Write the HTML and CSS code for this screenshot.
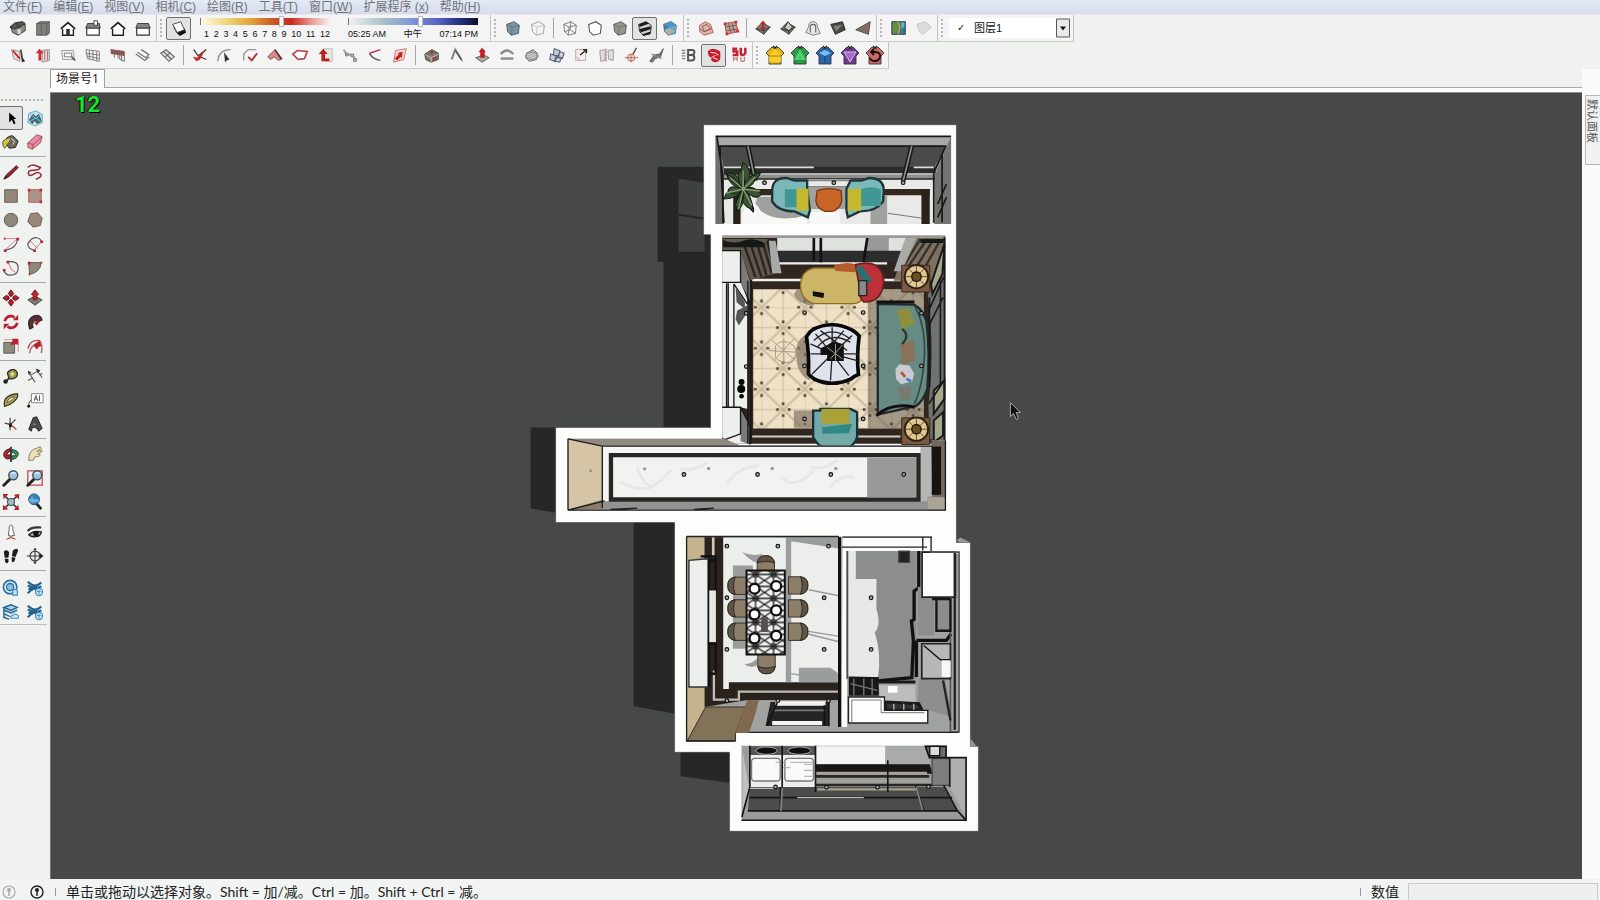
FILE: index.html
```html
<!DOCTYPE html>
<html lang="zh-CN">
<head>
<meta charset="utf-8">
<title>场景号1</title>
<link rel="stylesheet" href="styles.css">
</head>
<body>
<svg class="defs" aria-hidden="true">
  <defs>
    <symbol id="cube" viewBox="0 0 20 20"><path d="M3 6 11 3l6 4-1 9-8 2-4-4z" stroke="#555" stroke-linejoin="round"/><path d="M3 6l6 3 8-2M9 9l-1 9" fill="none" stroke="#555" stroke-opacity=".5"/></symbol>
    <symbol id="shirt" viewBox="0 0 20 20"><path d="M7 2l1 1h4l1-1 6 6-3 3v8H4v-8L1 8z" stroke="#333" stroke-width=".9" stroke-linejoin="round"/><path d="M8 1l2 2 2-2" fill="none" stroke="#222" stroke-width="1.4"/></symbol>
    <symbol id="quad" viewBox="0 0 20 20"><path d="M2 11 9 4l9 5-7 8z" fill="#77776f" stroke="#444"/><path d="M2 11l9 2 7-4M11 13v4" fill="none" stroke="#333"/></symbol>
    <symbol id="lens" viewBox="0 0 20 20"><path d="M2 18l7-7" stroke="#222" stroke-width="3.2" stroke-linecap="round"/><circle cx="12.500" cy="7" r="5" fill="#9fc3dd" stroke="#3f5664" stroke-width="1.600"/><path d="M10 6q2-3 5-1" stroke="#e4f2fa" stroke-width="1.400" fill="none"/></symbol>
    <symbol id="waves" viewBox="0 0 20 20"><path d="M2 3q8 8 15 1M2 7q8 6 15 1M2 16q6-8 14-4M3 12q4-5 9-3" fill="none" stroke="#23648f" stroke-width="2.400"/><circle cx="14.500" cy="14.500" r="4" fill="#cfe6f5" stroke="#3b8bc1" stroke-width="1.300"/><path d="M12 14h5M14.500 12v5" stroke="#3b8bc1"/></symbol>
    <pattern id="tile" x="363" y="230" width="130" height="123" patternUnits="userSpaceOnUse">
      <rect width="130" height="123" fill="#eee1c6"/>
      <path d="M0 0 130 123M130 0 0 123" stroke="#cdbfa3" stroke-width="7"/>
      <path d="M0 0H130M0 61H130M0 0V123M65 0V123" stroke="#b5a88e" stroke-width="2"/>
      <g fill="#54452f"><path d="M-4 14h8v9h-8zM14-4h9v8h-9zM126 14h8v9h-8zM107-4h9v8h-9zM-4 100h8v9h-8zM14 119h9v8h-9zM126 100h8v9h-8zM107 119h9v8h-9z"/><path d="M61 40h8v8h-8zM61 75h8v8h-8zM44 57h8v8h-8zM79 57h8v8h-8z"/></g>
    </pattern>
    <pattern id="lace" width="54" height="36" patternUnits="userSpaceOnUse">
      <rect width="54" height="36" fill="#f2f2f0"/><path d="M0 0 54 36M54 0 0 36M27 0V36M0 18H54" stroke="#222" stroke-width="4"/><circle cx="27" cy="18" r="9" fill="none" stroke="#222" stroke-width="3"/>
    </pattern>
    <g id="lamp"><circle r="5.500" fill="#aaa" stroke="#111" stroke-width="3.500"/></g>
    <g id="leaves"><path d="M0 0q-50-10-58 30 40 0 58-30q-20-60-50-45 10 40 50 45q-30 30-18 68 30-30 18-68q40 40 52 15-20-30-52-15q40-50 0-80-20 50 0 80q50-30 52-50-45 10-52 50q40 60 30 70-25-20-30-70z"/></g>
    <g id="seat"><path d="M-28-26H10q20 4 20 26 0 22-20 26H-28z" fill="#8d7e69" stroke="#3b342b" stroke-width="3"/><path d="M8-26q24 4 22 26 2 22-22 26 10-26 0-52z" fill="#5f5546" stroke="#2e2922" stroke-width="3"/></g>
    <g id="plate"><circle r="15" fill="#fff" stroke="#111" stroke-width="7"/></g>
    <g id="sidelamp"><path d="M-44-34H40V46H-44z" fill="#7b5a40" stroke="#38291e" stroke-width="3"/><circle r="35" fill="#e0c68f" stroke="#2c2116" stroke-width="6"/><path d="M0-33V33M-33 0H33M-24-24 24 24M24-24-24 24" stroke="#6b5430" stroke-width="3"/><circle r="14" fill="#6a4f22" stroke="#1c150b" stroke-width="4"/></g>
  </defs>
</svg>

<nav class="menubar">
  <button>文件(<u>F</u>)</button><button>编辑(<u>E</u>)</button><button>视图(<u>V</u>)</button><button>相机(<u>C</u>)</button><button>绘图(<u>R</u>)</button><button>工具(<u>T</u>)</button><button>窗口(<u>W</u>)</button><button>扩展程序 (<u>x</u>)</button><button>帮助(<u>H</u>)</button>
</nav>

<header class="toolbars">
  <div class="toolrow">
    <div class="group first">
      <button class="tool" aria-label="等轴视图"><svg viewBox="0 0 20 20"><path d="M2 9l6-4 10 1v7l-8 5-6-3z" fill="#8c8c84" stroke="#333"/><path d="M1 9l6-5 5 5-6 2zM12 9l6-4-3-2-7 1" fill="#555" stroke="#222"/><path d="M9 12l4-1v5l-3 1z" fill="#ddd"/></svg></button>
      <button class="tool" aria-label="俯视图"><svg viewBox="0 0 20 20"><path d="M3 5l4-2h10v13l-3 2H3z" fill="#80807a" stroke="#555"/><path d="M3 5h11v13M14 5l3-2M8 5v13" stroke="#5f5f5a" fill="none"/></svg></button>
      <button class="tool" aria-label="前视图"><svg viewBox="0 0 20 20"><path d="M4 10v8h12v-8" fill="#fff" stroke="#222" stroke-width="1.500"/><path d="M2 11l8-7 8 7" fill="#fff" stroke="#222" stroke-width="2"/><path d="M8 11h4v7H8z" fill="#333"/></svg></button>
      <button class="tool" aria-label="右视图"><svg viewBox="0 0 20 20"><path d="M3 10h14v8H3z" fill="#fff" stroke="#333" stroke-width="1.300"/><path d="M4 5h13l1 5H2z" fill="#85857e" stroke="#333"/><path d="M11 2h4v5h-4z" fill="#fff" stroke="#333"/></svg></button>
      <button class="tool" aria-label="后视图"><svg viewBox="0 0 20 20"><path d="M4 10v8h12v-8" fill="#fff" stroke="#222" stroke-width="1.500"/><path d="M2 11l8-7 8 7" fill="#fff" stroke="#222" stroke-width="2"/></svg></button>
      <button class="tool" aria-label="左视图"><svg viewBox="0 0 20 20"><path d="M3 10h14v8H3z" fill="#fff" stroke="#333" stroke-width="1.300"/><path d="M4 5h12l2 5H2z" fill="#85857e" stroke="#333"/></svg></button>
    </div>
    <div class="group shadows">
      <i class="grip"></i>
      <button class="tool on" aria-label="显示阴影" aria-pressed="true"><svg viewBox="0 0 20 20"><path d="M6 14l10-4 2 5-7 4z" fill="#111"/><path d="M3 6l9-3 4 9-8 3z" fill="#fff" stroke="#444"/><path d="M3 6l5 9 1 3-5-8z" fill="#555"/></svg></button>
      <div class="slide months">
        <input type="range" aria-label="月份" min="0" max="100" value="63">
        <div class="ticks"><span>1</span><span>2</span><span>3</span><span>4</span><span>5</span><span>6</span><span>7</span><span>8</span><span>9</span><span>10</span><span>11</span><span>12</span></div>
      </div>
      <div class="slide hours">
        <input type="range" aria-label="时间" min="0" max="100" value="56">
        <div class="ticks"><span>05:25 AM</span><span>中午</span><span>07:14 PM</span></div>
      </div>
    </div>
    <div class="group">
      <i class="grip"></i>
      <button class="tool" aria-label="X 光透视"><svg fill="#7695aa"><use href="#cube"/></svg></button>
      <button class="tool" aria-label="后边线"><svg fill="#f6f6f6" opacity=".55"><use href="#cube"/></svg></button>
      <i class="sep"></i>
      <button class="tool" aria-label="线框显示"><svg viewBox="0 0 20 20"><path d="M3 6 11 3l6 4-1 9-8 2-4-4zM3 6l6 3 8-2M9 9l-1 9M11 3l-1 9-6 2M10 12l6 4" fill="none" stroke="#777"/></svg></button>
      <button class="tool" aria-label="消隐"><svg viewBox="0 0 20 20"><path d="M3 6 11 3l6 4-1 9-8 2-4-4z" fill="#fff" stroke="#555" stroke-width="1.200"/></svg></button>
      <button class="tool" aria-label="阴影"><svg fill="#94968a"><use href="#cube"/></svg></button>
      <button class="tool on" aria-label="材质贴图" aria-pressed="true"><svg viewBox="0 0 20 20"><path d="M3 6 11 3l6 4-1 9-8 2-4-4z" fill="#d4d4cf" stroke="#333"/><path d="M3 6l8-3 4 2-11 4zM4 11l12-3 1 3-12 4zM7 17l9-3v3l-8 2z" fill="#1c1c1c"/></svg></button>
      <button class="tool" aria-label="单色显示"><svg viewBox="0 0 20 20"><path d="M3 6 11 3l6 4-1 9-8 2-4-4z" fill="#3f86b9" stroke="#456"/><path d="M9 9l8-2-1 9-8 2z" fill="#6aa5cf"/><path d="M3 6l8-3 5 3-7 3z" fill="#4b97cd"/><path d="M4 12l5-2 7 4-8 4-4-4z" fill="#a9b3a9"/></svg></button>
    </div>
    <div class="group">
      <i class="grip"></i>
      <button class="tool" aria-label="根据等高线创建"><svg viewBox="0 0 20 20"><path d="M3 7l6-4 6 3 3 9-10 3-5-4z" fill="#d9b6ae" stroke="#b8574f"/><path d="M6 8l5-2 4 5-7 3zM3 11l5 3 8-3" fill="none" stroke="#a0504a"/></svg></button>
      <button class="tool" aria-label="根据网格创建"><svg viewBox="0 0 20 20"><path d="M3 5l12-2 3 11-13 3z" fill="#b5aa9f" stroke="#b14c44"/><path d="M7 4l3 12M11 4l3 11M4 9l12-2M5 13l12-2" stroke="#8b4b44"/><path d="M2 4h3v3H2zM14 2h3v3h-3zM4 15h3v3H4zM16 12h3v3h-3z" fill="#cf2c2c"/></svg></button>
      <i class="sep"></i>
      <button class="tool" aria-label="曲面起伏"><svg viewBox="0 0 20 20"><use href="#quad" width="20" height="20"/><path d="M10 2l3 3-2 1v3l2 1-3 3-3-3 2-1V6L7 5z" fill="#bd2424"/></svg></button>
      <button class="tool" aria-label="曲面平整"><svg viewBox="0 0 20 20"><use href="#quad" width="20" height="20"/><path d="M6 10l4-7 5 6-4 4z" fill="#c9c9c6" stroke="#222"/></svg></button>
      <button class="tool" aria-label="曲面投射"><svg viewBox="0 0 20 20"><path d="M5 9q0-6 5-6t5 6l3 7-8 2-8-3z" fill="#e6e6e4" stroke="#777"/><path d="M7 15V9q0-3 3-3t3 3v6" fill="none" stroke="#666" stroke-width="1.300"/></svg></button>
      <button class="tool" aria-label="添加细部"><svg viewBox="0 0 20 20"><path d="M2 6l13-3 3 9-11 5z" fill="#494947" stroke="#222"/><path d="M5 8l10-2-7 8z" fill="#80807a"/></svg></button>
      <button class="tool" aria-label="对调角线"><svg viewBox="0 0 20 20"><path d="M2 12L18 3l-2 14z" fill="#777269" stroke="#444"/><path d="M10 8l5 8 2-9z" fill="#8f6660"/></svg></button>
    </div>
    <div class="group">
      <i class="grip"></i>
      <button class="tool" aria-label="添加位置"><svg viewBox="0 0 20 20"><path d="M2 3h15v14H2z" fill="#3c7690" stroke="#333"/><path d="M3 4h6l2 5-4 7H3z" fill="#6b8d42"/><path d="M12 4h4v5l-3 2z" fill="#59b1d1"/><path d="M9 3l2 6-2 8" stroke="#caa741" stroke-width="1.500" fill="none"/></svg></button>
      <button class="tool" aria-label="切换地形"><svg viewBox="0 0 20 20"><path d="M2 6l10-3 6 6-9 8-4-3z" fill="#dcdcda" stroke="#c2c2c0"/></svg></button>
    </div>
    <div class="group">
      <i class="grip"></i>
      <div class="combo">
        <span class="check">✓</span>
        <select aria-label="图层"><option>图层1</option></select>
        <svg class="drop" viewBox="0 0 14 19"><path d="M.5.500h13v18H.5z" fill="#e9eaea" stroke="#555"/><path d="M4 8h6l-3 4z" fill="#111"/></svg>
      </div>
    </div>
  </div>

  <div class="toolrow">
    <div class="group first">
      <button class="tool" aria-label="拉线成面"><svg viewBox="0 0 20 20"><path d="M3 4l9 2v11l-7-3z" fill="#ddd" stroke="#999"/><path d="M4 5l8 9" stroke="#c22" stroke-width="2"/><path d="M13 4l2 12" stroke="#444" stroke-width="2"/><path d="M15 13l3 4-4 1z" fill="#222"/></svg></button>
      <button class="tool" aria-label="路径成面"><svg viewBox="0 0 20 20"><path d="M9 5l8-1v12l-8 2z" fill="#e3dcd8" stroke="#888"/><path d="M12 5v11M15 5v11" stroke="#b66"/><path d="M6 3l5 5H8v8H5V8H2z" fill="#cd2b2b"/></svg></button>
      <button class="tool" aria-label="开窗"><svg viewBox="0 0 20 20"><path d="M3 5h13l1 10H4z" fill="#eee" stroke="#999"/><path d="M6 8h8v4H6z" fill="#fff" stroke="#777"/><path d="M14 12l4 4" stroke="#444" stroke-width="1.500"/></svg></button>
      <button class="tool" aria-label="幕墙"><svg viewBox="0 0 20 20"><path d="M2 4l15 2v11l-13-3zM2 8l15 2M3 11l14 3M6 5v10M10 5v11M14 6v11" fill="none" stroke="#777"/></svg></button>
      <button class="tool" aria-label="墙体"><svg viewBox="0 0 20 20"><path d="M2 4l15 2v5l-15-2z" fill="#b44"/><path d="M2 4l15 2v11l-5-2V9l-8-1zM3 7h13M6 5v8M10 6v8M14 6v10" fill="none" stroke="#666"/></svg></button>
      <button class="tool" aria-label="楼梯"><svg viewBox="0 0 20 20"><path d="M2 9l10 7 5-4M4 7l9 6 4-4M8 4l8 5" fill="none" stroke="#777" stroke-width="1.400"/></svg></button>
      <button class="tool" aria-label="坡道"><svg viewBox="0 0 20 20"><path d="M2 8l9 9 6-5-9-8zM5 6l9 9M7 12l6-5" fill="#ddd" stroke="#666" stroke-width="1.200"/></svg></button>
      <i class="sep"></i>
      <button class="tool" aria-label="修剪"><svg viewBox="0 0 20 20"><path d="M3 4l5 7 9-7M8 11l9 4" fill="none" stroke="#444" stroke-width="1.500"/><path d="M2 12l5 1 9-9-6 11-4 2z" fill="#c22"/></svg></button>
      <button class="tool" aria-label="圆角"><svg viewBox="0 0 20 20"><path d="M2 17q1-13 14-13" fill="none" stroke="#888" stroke-width="1.500"/><path d="M9 7l6 8-3 1-2 2z" fill="#333"/></svg></button>
      <button class="tool" aria-label="倒角"><svg viewBox="0 0 20 20"><path d="M3 16V9l5-5h9" fill="none" stroke="#999" stroke-width="1.500"/><path d="M8 12l4 4 6-8" fill="none" stroke="#b12a38" stroke-width="2"/></svg></button>
      <button class="tool" aria-label="屋顶"><svg viewBox="0 0 20 20"><path d="M2 12l8-8 8 10-4 2-5-4-4 3z" fill="#d88a90" stroke="#943"/><path d="M10 4l7 11" stroke="#333" stroke-width="1.500"/></svg></button>
      <button class="tool" aria-label="偏移面"><svg viewBox="0 0 20 20"><path d="M2 9l5-4 11 1-3 8-7 1z" fill="#fff" stroke="#bf3e43" stroke-width="1.800"/><path d="M2 9l6 6 7-1" fill="none" stroke="#855" stroke-width="1"/></svg></button>
      <button class="tool" aria-label="拉伸"><svg viewBox="0 0 20 20"><path d="M9 3h9v14H9z" fill="#e6e6e4" stroke="#bbb"/><path d="M15 17H6V9H3l5-6 5 6h-3v5h5z" fill="#be2020"/></svg></button>
      <button class="tool" aria-label="焊接"><svg viewBox="0 0 20 20"><path d="M3 4l3 5 7 1 3 6" fill="none" stroke="#999" stroke-width="2"/><path d="M5 8h3v3H5zM11 9h3v3h-3zM14 14h3v3h-3z" fill="#bbb" stroke="#777"/></svg></button>
      <button class="tool" aria-label="延伸"><svg viewBox="0 0 20 20"><path d="M16 4L4 8" stroke="#b34" stroke-width="1.600"/><path d="M4 8q2 6 12 8" fill="none" stroke="#555" stroke-width="1.600"/></svg></button>
      <button class="tool" aria-label="选面"><svg viewBox="0 0 20 20"><path d="M5 5l12-2-3 12-11 3z" fill="#f2dfd8" stroke="#c66"/><path d="M13 6L7 8l2 1-5 5 3 2 4-4 1 2z" fill="#c8231f"/></svg></button>
      <i class="sep"></i>
      <button class="tool" aria-label="组件"><svg viewBox="0 0 20 20"><path d="M2 9l8-5 7 4v7l-8 3-6-3z" fill="#7c7568" stroke="#444"/><path d="M3 10l6 3 8-4M9 13v5" stroke="#ccc" fill="none"/><path d="M8 5l5 2-4 2zM11 13l4-1v2l-4 2z" fill="#a33"/></svg></button>
      <button class="tool" aria-label="折线"><svg viewBox="0 0 20 20"><path d="M4 15L8 4l7 11" fill="none" stroke="#888" stroke-width="2.400"/><path d="M8 5l8 12" stroke="#333"/></svg></button>
      <button class="tool" aria-label="推拉组"><svg viewBox="0 0 20 20"><path d="M3 13l9-3 6 3-8 5z" fill="#a6b39d" stroke="#555"/><path d="M10 2l4 4-1 1v6H8V7H6z" fill="#c01e28"/></svg></button>
      <button class="tool" aria-label="弯曲"><svg viewBox="0 0 20 20"><path d="M3 9q7-8 14 0" fill="none" stroke="#888" stroke-width="2.600"/><path d="M3 14h14" stroke="#888" stroke-width="2.600"/></svg></button>
      <button class="tool" aria-label="旋转组"><svg viewBox="0 0 20 20"><path d="M4 8l7-4 5 4-1 7-8 2-4-4z" fill="#bbb" stroke="#666"/><ellipse cx="10" cy="11" rx="7" ry="4" fill="none" stroke="#888"/></svg></button>
      <button class="tool" aria-label="阵列"><svg viewBox="0 0 20 20"><path d="M7 3l6 2-1 6-6-1zM13 6l5 2-2 6-5-1zM3 9l6 2-2 6-5-2zM10 12l5 1-2 5-5-1z" fill="#c5cfde" stroke="#566078" stroke-width="1.200"/></svg></button>
      <button class="tool" aria-label="缩放面"><svg viewBox="0 0 20 20"><path d="M3 4h11v12H3z" fill="#f5efe7" stroke="#aaa"/><path d="M8 10l6-5M11 4h4v4" stroke="#222" fill="none" stroke-width="1.500"/><path d="M4 12l4 4" stroke="#b88"/></svg></button>
      <button class="tool" aria-label="镜像"><svg viewBox="0 0 20 20"><path d="M2 5l6-1v12l-5 1zM11 5l6-1v12l-5-1z" fill="#ddd" stroke="#999"/><path d="M9 3v15" stroke="#a55" stroke-dasharray="2 1"/></svg></button>
      <button class="tool" aria-label="清理"><svg viewBox="0 0 20 20"><path d="M15 2l-5 9" stroke="#555" stroke-width="1.600"/><circle cx="9" cy="13" r="4" fill="#eee0cf" stroke="#b7623f"/><path d="M2 13h15M9 9v9" stroke="#a66"/></svg></button>
      <button class="tool" aria-label="扭曲"><svg viewBox="0 0 20 20"><path d="M2 17l5-7 6-1 4-6-3 9-6 2-3 4z" fill="#777" stroke="#555"/><path d="M4 9l11 5" stroke="#888" stroke-width="1.500"/></svg></button>
      <i class="sep"></i>
      <button class="tool" aria-label="旧版"><svg viewBox="0 0 20 20"><path d="M2 5h4M2 8h4M2 11h4M2 14h4" stroke="#888" stroke-width="1.600"/><path d="M9 4v12M8 4.500h5q3 0 3 2.500t-3 3H9h4q3 0 3 3t-3 3H8" fill="none" stroke="#555" stroke-width="2.200"/></svg></button>
      <button class="tool on" aria-label="插件库" aria-pressed="true"><svg viewBox="0 0 20 20"><path d="M3 6q2-3 6-3t8 3v8q-1 4-6 4-5-1-4-5l7-3q-5 0-8 3-3-3-3-7z" fill="#cc1c2b"/><path d="M6 7q6 0 9 3M9 13l5 2" stroke="#fff" fill="none"/></svg></button>
      <button class="tool" aria-label="SU 插件"><svg viewBox="0 0 20 20"><path d="M8 3H4v3h4v4H3M12 2v6q0 2 2 2t3-2V2" fill="none" stroke="#c22330" stroke-width="2.800"/><path d="M4 12v5M8 12v5M12 12v5M16 12v5M4 14h4M12 17h4" stroke="#b88" stroke-width="1.500"/></svg></button>
    </div>
    <div class="group">
      <i class="grip"></i>
      <button class="tool" aria-label="换装一"><svg class="big" viewBox="0 0 20 20"><g fill="#e9b812"><use href="#shirt" width="20" height="20"/></g><path d="M4 11l6-7 6 7v6H4z" fill="#ffd52f" opacity=".8"/><path d="M4 11h12" stroke="#a57d00"/></svg></button>
      <button class="tool" aria-label="换装二"><svg class="big" viewBox="0 0 20 20"><g fill="#2b9a46"><use href="#shirt" width="20" height="20"/></g><path d="M10 4l6 11H4z" fill="#4fd06e"/></svg></button>
      <button class="tool" aria-label="换装三"><svg class="big" viewBox="0 0 20 20"><g fill="#2866aa"><use href="#shirt" width="20" height="20"/></g><path d="M4 8l6-3 6 3-6 3z" fill="#7db9ee"/><path d="M10 11v7" stroke="#13406f"/></svg></button>
      <button class="tool" aria-label="换装四"><svg class="big" viewBox="0 0 20 20"><g fill="#70348f"><use href="#shirt" width="20" height="20"/></g><path d="M4 7h12l-6 10z" fill="#a06bc3" stroke="#ddb9f0"/></svg></button>
      <button class="tool" aria-label="还原"><svg class="big" viewBox="0 0 20 20"><g fill="#c96a66"><use href="#shirt" width="20" height="20"/></g><path d="M6 7h5q5 1 4 5t-5 4q-4 0-5-3M9 4L6 7l3 3" fill="none" stroke="#160f0f" stroke-width="1.800"/></svg></button>
    </div>
  </div>
</header>

<div class="workspace">
  <aside class="palette">
    <i class="hgrip"></i>
    <div class="tools">
      <button class="tool on" aria-label="选择" aria-pressed="true"><svg viewBox="0 0 20 20"><path d="M8 4v11l3-3 2 5 2-1-2-5h3z" fill="#000"/></svg></button>
      <button class="tool" aria-label="制作组件"><svg viewBox="0 0 20 20"><path d="M3 5l8-3 7 4v9l-8 4-8-4z" fill="#c7e4ee" stroke="#4fa4c3"/><path d="M4 12l4-6 3 3 3-3 3 8-5 2-2-4-3 4z" fill="#54717b" stroke="#25434d"/><path d="M3 5l15 10M18 6L2 15" stroke="#6cc3de"/></svg></button>
      <button class="tool" aria-label="材质"><svg viewBox="0 0 20 20"><path d="M3 10q2-7 9-7l6 6-3 7-7 1z" fill="#6d6a59" stroke="#222"/><path d="M1 9l7-4q3 2-1 6l-4 6q-3-2-2-8z" fill="#dbc63b" stroke="#554"/><path d="M10 6l4 3-2 4" stroke="#ddd" fill="none"/></svg></button>
      <button class="tool" aria-label="擦除"><svg viewBox="0 0 20 20"><path d="M2 11L12 2l6 2-2 7-9 7-5-2z" fill="#e48b9e" stroke="#a05262"/><path d="M2 11l6 2 10-9M8 13l-1 5" fill="none" stroke="#a05262"/></svg></button>
    </div>
    <hr>
    <div class="tools">
      <button class="tool" aria-label="直线"><svg viewBox="0 0 20 20"><path d="M2 18L5 13 16 3l2 2L8 15z" fill="#9b2431" stroke="#49151b"/><path d="M2 18l2-4 2 2z" fill="#222"/></svg></button>
      <button class="tool" aria-label="手绘线"><svg viewBox="0 0 20 20"><path d="M2 5q4-4 9-2t5 2q-1 3-8 3t-5 5q2 2 6-1t7 0-5 6" fill="none" stroke="#912c37" stroke-width="1.700"/></svg></button>
      <button class="tool" aria-label="矩形"><svg viewBox="0 0 20 20"><path d="M3 3h14v14H3z" fill="#8f877a" stroke="#5e5a52"/><path d="M3 17L17 3" stroke="#c4757a"/></svg></button>
      <button class="tool" aria-label="旋转矩形"><svg viewBox="0 0 20 20"><path d="M3 3h14v14H3z" fill="#aa9488" stroke="#bd5a5b"/><path d="M2 2h3v3H2zM15 2h3v3h-3zM15 15h3v3h-3z" fill="#bd3038"/></svg></button>
      <button class="tool" aria-label="圆"><svg viewBox="0 0 20 20"><circle cx="10" cy="10" r="7.500" fill="#8f887a" stroke="#5b574f"/></svg></button>
      <button class="tool" aria-label="多边形"><svg viewBox="0 0 20 20"><path d="M5 3l8-1 5 6-2 8-8 2-6-6z" fill="#97887a" stroke="#6b554f"/></svg></button>
      <button class="tool" aria-label="圆弧"><svg viewBox="0 0 20 20"><path d="M17 4q0 11-14 13" fill="none" stroke="#56555a" stroke-width="1.200"/><path d="M3 4h14L3 17" fill="none" stroke="#d57880"/><path d="M2 3h2v2H2zM16 3h3v3h-3zM2 16h3v3H2z" fill="#ad2a36"/></svg></button>
      <button class="tool" aria-label="两点圆弧"><svg viewBox="0 0 20 20"><path d="M9 17Q2 15 2 10 6 2 12 3q5 1 5 5" fill="none" stroke="#56555a" stroke-width="1.300"/><path d="M4 6l9 9M9 17l8-9" stroke="#d0616c"/><path d="M16 6h3v3h-3zM8 16h3v3H8z" fill="#ad2a36"/></svg></button>
      <button class="tool" aria-label="三点圆弧"><svg viewBox="0 0 20 20"><path d="M7 3q11-1 11 7t-9 8q-5 0-7-5" fill="none" stroke="#56555a" stroke-width="1.300"/><path d="M7 4l3 7 5 4" stroke="#d0616c" fill="none"/><path d="M5 2h3v3H5zM1 11h3v3H1z" fill="#ad2a36"/></svg></button>
      <button class="tool" aria-label="扇形"><svg viewBox="0 0 20 20"><path d="M3 4h14Q16 15 4 17z" fill="#8f877a" stroke="#5e5a52"/><path d="M2 3h3v3H2zM16 3h2v2h-2zM3 16h2v2H3z" fill="#ad2a36"/></svg></button>
    </div>
    <hr>
    <div class="tools">
      <button class="tool" aria-label="移动"><svg viewBox="0 0 20 20"><path d="M10 1l3 4-2 3H9L7 5zM10 19l3-4-2-3H9l-2 3zM1 10l4-3 3 2v2l-3 2zM19 10l-4-3-3 2v2l3 2z" fill="#b4202e" stroke="#611"/></svg></button>
      <button class="tool" aria-label="推拉"><svg viewBox="0 0 20 20"><path d="M2 12l8-4 8 4-8 6z" fill="#777d6f" stroke="#444"/><path d="M10 1l4 5-2 1v5H8V7L6 6z" fill="#bc2430" stroke="#711"/></svg></button>
      <button class="tool" aria-label="旋转"><svg viewBox="0 0 20 20"><path d="M3 9q2-6 8-5.500l3 1.500M17 11q-2 6-8 5.500L6 15" fill="none" stroke="#b4202e" stroke-width="3"/><path d="M12 8l6 0 0-6zM8 12H2v6z" fill="#b4202e"/></svg></button>
      <button class="tool" aria-label="路径跟随"><svg viewBox="0 0 20 20"><path d="M4 18Q0 6 9 3q8-2 9 5l-6 2q0-3-3-1-3 3-1 7z" fill="#553036" stroke="#221518"/><path d="M9 11q3-4 7-2l-4 5z" fill="#a82430"/></svg></button>
      <button class="tool" aria-label="缩放"><svg viewBox="0 0 20 20"><path d="M2 6h12v12H2z" fill="#8f8b7c" stroke="#555"/><path d="M2 3h16v14" fill="none" stroke="#d88"/><path d="M9 9l3-5-1-2h7v7l-2-1z" fill="#bd2130"/></svg></button>
      <button class="tool" aria-label="偏移"><svg viewBox="0 0 20 20"><path d="M2 13Q5 2 15 4q4 4 2 14M4 18q1-9 7-9" fill="none" stroke="#b6545d" stroke-width="1.500"/><path d="M8 9l7-5 2 6-3 1-2 3z" fill="#bd2130"/></svg></button>
    </div>
    <hr>
    <div class="tools">
      <button class="tool" aria-label="卷尺"><svg viewBox="0 0 20 20"><path d="M6 7q2-5 8-4 5 3 2 8-3 3-8 2z" fill="#98984b" stroke="#2c2c16" stroke-width="1.400"/><path d="M9 7q4-3 5 1l-3 3z" fill="#dad99a"/><path d="M8 12l-4 5" stroke="#333" stroke-width="2"/><circle cx="4" cy="16" r="2.500" fill="#222"/></svg></button>
      <button class="tool" aria-label="尺寸"><svg viewBox="0 0 20 20"><path d="M3 6l7 11M11 2l7 10M5 9l9-5M2 15l6-3M15 9l3-2" stroke="#555" stroke-width="1.200"/><path d="M2 4l4 2-3 3zM12 2l4 2-3 3z" fill="#333"/></svg></button>
      <button class="tool" aria-label="量角器"><svg viewBox="0 0 20 20"><path d="M3 17Q0 5 17 3q2 3-3 8T3 17z" fill="#a3a34d" stroke="#33331b" stroke-width="1.300"/><path d="M6 13q0-5 8-7-1 4-8 7z" fill="#efefe6" stroke="#555"/></svg></button>
      <button class="tool" aria-label="文字"><svg viewBox="0 0 20 20"><path d="M6 3h13v10H6z" fill="#fff" stroke="#777"/><path d="M9 11l2-6 2 6M10 9h2M15 5v6" fill="none" stroke="#444"/><path d="M6 10q-3 1-3 7" fill="none" stroke="#333"/><circle cx="3" cy="17" r="1.600" fill="#111"/></svg></button>
      <button class="tool" aria-label="轴"><svg viewBox="0 0 20 20"><path d="M9 3v14M3 9l8 2M8 12l7-7" stroke="#444" stroke-width="1.300"/><path d="M10 11l6 5" stroke="#a44" stroke-width="1.500"/><path d="M8 9l3 1v3l-3 1z" fill="#222"/></svg></button>
      <button class="tool" aria-label="三维文字"><svg viewBox="0 0 20 20"><path d="M3 16L8 3l4-1 6 13-4 3-3-4H7l-1 4z" fill="#4b4b4b" stroke="#222"/><path d="M9 8l2 3H8z" fill="#888"/></svg></button>
    </div>
    <hr>
    <div class="tools">
      <button class="tool" aria-label="环绕观察"><svg viewBox="0 0 20 20"><path d="M9 4Q1 6 2 12q2 5 7 3v-4H5q1-3 4-4z" fill="#b02733" stroke="#4d1016"/><path d="M11 5q8 1 7 6-2 5-7 5v-4h4q1-3-4-4z" fill="#3d8c5a" stroke="#184a2b"/><path d="M10 2v17" stroke="#333" stroke-width="2"/></svg></button>
      <button class="tool" aria-label="平移"><svg viewBox="0 0 20 20"><path d="M3 17q0-9 5-12l8-3 1 2-5 3 6-1-1 2-4 2 3 1-2 2-4 0-2 4z" fill="#eadfb6" stroke="#857c5b"/></svg></button>
      <button class="tool" aria-label="缩放视图"><svg><use href="#lens"/></svg></button>
      <button class="tool" aria-label="缩放窗口"><svg viewBox="0 0 20 20"><path d="M2 2h16v16H2z" fill="none" stroke="#c6405a" stroke-width="1.400"/><use href="#lens" width="20" height="20"/></svg></button>
      <button class="tool" aria-label="充满视窗"><svg viewBox="0 0 20 20"><path d="M3 3l14 14M17 3L3 17" stroke="#333" stroke-width="1.800"/><path d="M1 1h6L2 7zM19 1v6l-6-5zM1 19v-6l6 5zM19 19h-6l5-6z" fill="#b4202e"/><circle cx="10" cy="10" r="4" fill="#9fbccb" stroke="#334"/></svg></button>
      <button class="tool" aria-label="上一个"><svg viewBox="0 0 20 20"><path d="M11 11l6 7" stroke="#222" stroke-width="3"/><circle cx="9" cy="7" r="6" fill="#3783bb" stroke="#24506f"/><path d="M3 8l5-4v3h6v3H8v2z" fill="#73b2dd"/></svg></button>
    </div>
    <hr>
    <div class="tools">
      <button class="tool" aria-label="定位相机"><svg viewBox="0 0 20 20"><path d="M10 2q3 1 2 5l2 7h-3v2H9v-2H7l1-7q-1-4 2-5z" fill="#fff" stroke="#555"/><path d="M5 18l5-2 5 2" fill="none" stroke="#c44" stroke-width="1.300"/></svg></button>
      <button class="tool" aria-label="绕轴旋转"><svg viewBox="0 0 20 20"><path d="M2 9q3-5 15-4" fill="none" stroke="#333" stroke-width="2.500"/><path d="M3 13q6-5 14-3-1 5-6 5-5 1-8-2z" fill="#bbb" stroke="#222" stroke-width="1.500"/><circle cx="11" cy="12" r="3" fill="#111"/></svg></button>
      <button class="tool" aria-label="漫游"><svg viewBox="0 0 20 20"><path d="M2 5q4-3 6 1l-1 6H3zM3 13h4q1 5-2 5-2-1-2-5zM12 4q5-4 6 0l-3 7-4-1zM11 11l4 1q-1 5-3 5-2-1-1-6z" fill="#1d1d1d"/></svg></button>
      <button class="tool" aria-label="剖切面"><svg viewBox="0 0 20 20"><circle cx="10" cy="10" r="5.500" fill="#eee" stroke="#444" stroke-width="1.300"/><path d="M1 10h18M10 2v16" stroke="#333" stroke-width="1.200"/><path d="M15 6l4 4-4 4zM8 3l2-2 2 2zM8 17l2 2 2-2z" fill="#222"/></svg></button>
    </div>
    <hr>
    <div class="tools last">
      <button class="tool" aria-label="模型库"><svg viewBox="0 0 20 20"><circle cx="9" cy="9" r="7.500" fill="#d8eaf5" stroke="#2a71a1" stroke-width="1.800"/><circle cx="9" cy="9" r="4" fill="#8fc1e2" stroke="#2a71a1" stroke-width="1.400"/><path d="M12 18v-5q2-3 5 0v5z" fill="#cfe6f5" stroke="#3b8bc1" stroke-width="1.300"/></svg></button>
      <button class="tool" aria-label="共享模型"><svg><use href="#waves"/></svg></button>
      <button class="tool" aria-label="图层库"><svg viewBox="0 0 20 20"><path d="M2 5l8-3 7 3-7 3zM2 5v3l8 3 7-3M2 9v3l7 3M2 13v3l6 2" fill="#a9d0e8" stroke="#23648f" stroke-width="1.500"/><path d="M10 17q-1-3 2-3 1-3 4-1 3 0 2 4z" fill="#d8eaf5" stroke="#3b8bc1" stroke-width="1.200"/></svg></button>
      <button class="tool" aria-label="扩展库"><svg><use href="#waves"/></svg></button>
    </div>
  </aside>

  <div class="center">
    <div class="scenes"><button class="scene">场景号1</button></div>
    <main class="viewport">
      <svg class="model" viewBox="50 93 1532 785" role="img" aria-label="户型模型俯视图">
        <g fill="#272826">
          <path d="M657 166h53v261h-47V261h-6zM530 427h30v86l-30-5zM633 520h45v194l-45-8zM680 750h52v33l-52-7z"/>
          <path d="M678 178l26 4v69h-26z" fill="#3f413e"/><path d="M678 214l26 4" stroke="#272826" stroke-width="2"/>
        </g>
        <path d="M956 540l4-3 10 5-4 3zM970 738l6 8h-8z" fill="#999"/>
        <path d="M703 124H956V542H970V746H978V831H729V752H674V522H555V427H710V234H703z" fill="#fdfefc" stroke="#333" stroke-width=".5"/>

        <!-- balcony -->
        <g transform="translate(640 110) scale(.33333)">
          <path d="M225 77H932V340H225z" fill="#8e8f8d"/>
          <path d="M225 77H932L918 106H236z" fill="#a8a9a7"/>
          <path d="M236 106H918L880 172H250z" fill="#4a4b49"/>
          <path d="M250 205H885V340H250z" fill="#e9eae8"/>
          <path d="M250 168H885V192H250z" fill="#2b2c2b"/><path d="M340 190H884M250 170H520M820 170H880" stroke="#dcdcda" stroke-width="5"/>
          <path d="M250 205H885" stroke="#222" stroke-width="5"/><path d="M262 235H868V254H262z" fill="#34271f"/><path d="M843 235h25v105h-25zM278 250h22v90h-22z" fill="#2a211b"/>
          <path d="M350 258H500V330Q420 325 390 330 350 310 345 280zM690 255h50v85h-50zM500 205h130v90H500z" fill="#a0a19f"/>
          <path d="M305 310q30-60 55-10 50 40 140 12v28H305zM508 305h90v35h-90z" fill="#f8f9f7"/>
          <path d="M500 210h130v18H500z" fill="#e9eae8" stroke="#777" stroke-width="3"/><path d="M742 308l100 14" stroke="#777" stroke-width="3"/>
          <path d="M225 77l25 95v168h-25z" fill="#70716f"/><path d="M932 77l-50 125v138h50z" fill="#747573"/>
          <path d="M229 77l18 120v140M238 106l12 230M916 106l-36 80v150M905 130v205M918 220l-26 60M918 260l-26 60M225 77H932M236 106H918" fill="none" stroke="#171817" stroke-width="5"/>
          <path d="M322 106l22 105M814 106l-26 105" stroke="#151615" stroke-width="14"/><path d="M322 106l22 105M814 106l-26 105" stroke="#8c8d8b" stroke-width="5"/>
          <g fill="#3c5236" stroke="#0f1d0e" stroke-width="3"><use href="#leaves" transform="translate(308 235)"/><use href="#leaves" transform="translate(308 235) rotate(155) scale(.85)"/></g>
          <path d="M308 235l-40-34M308 235l36-36M308 235l50 6M308 235l-52 12M308 235l-14 60M308 235l26 50M308 235V180" stroke="#8c9e70" stroke-width="4"/>
          <g stroke="#20343a" stroke-width="7"><path d="M395 240q0-40 45-38l22 8h38v24l8 66-6 20-40-18q-50 0-67-30z" fill="#7bb9b9"/><path d="M730 240q0-38-45-38l-22 8h-33l-12 24v66l4 20 36-18q50 0 70-30z" fill="#7bb9b9"/></g>
          <path d="M433 236h40v54h-40zM661 236q30-12 60 0v50h-60z" fill="#3f9693"/><path d="M468 234h36v66h-36zM622 234h40v66h-40z" fill="#c4b831"/>
          <path d="M530 240q35-12 72 0l2 30q-6 28-30 32h-20q-24-6-28-32z" fill="#c66527" stroke="#7d3510" stroke-width="4"/>
          <use href="#lamp" x="372" y="216"/><use href="#lamp" x="580" y="216"/><use href="#lamp" x="788" y="216"/>
        </g>

        <!-- living room -->
        <g transform="translate(640 230) scale(.33333)">
          <path d="M245 18H915V640H245z" fill="#30261f"/>
          <path d="M410 20H800V62H410z" fill="#dfe1df"/><path d="M680 20h65v42h-65z" fill="#999"/><path d="M395 60H780V95H395z" fill="#2c2d2c"/>
          <path d="M410 98H740M335 148H490M720 148H780" stroke="#f0efeb" stroke-width="7"/><path d="M520 20v70M541 20v75M681 20l-12 75" stroke="#111" stroke-width="8"/>
          <path d="M248 25H380L420 125 330 148 300 60H248z" fill="#60584e"/><path d="M310 40l35 100M330 40l32 98M350 40l28 94M368 40l26 88M380 30l24 98" stroke="#292420" stroke-width="7"/><path d="M385 30l20 0 18 98h-28z" fill="#a8a9a8"/>
          <path d="M805 22H915V150H760z" fill="#7c7060"/><path d="M860 25l-60 88M880 25l-55 88M900 28l-50 88M840 25l-50 80" stroke="#373129" stroke-width="7"/><path d="M795 22h34l-45 100h-24z" fill="#aaaba9"/>
          <path d="M248 28q30 14 60 2t65 8v12H248zM840 25h70v12h-70z" fill="#161914"/><path d="M245 18H915" stroke="#999" stroke-width="8"/>
          <path d="M338 176H850V594H338z" fill="url(#tile)"/><path d="M682 176H850V594H682z" fill="#483f37" opacity=".44"/>
          <path d="M460 190q10 30 60 36V176h-50zM460 540h60v52h-60zM500 310q-40 20-32 70 0 50 40 70z" fill="#827463" opacity=".7"/>
          <g stroke="#a89c88" stroke-width="3" fill="none"><path d="M385 360l85 5M395 330l70 60M400 390l60-65M430 325v75M405 345q20-25 55 0 15 25-5 50-35 5-50-15z"/></g>
          <path d="M335 618H780" stroke="#d3d0c9" stroke-width="6"/>
          <path d="M245 60h55v95l22 55v325l-22-5v80l28 30h-50l-33-20z" fill="#edefed"/>
          <path d="M300 60l28 90v60l-28-55zM300 530l28 55v57l-28-10z" fill="#7b7c7a"/><path d="M245 60h55v95h-55M258 158v372M280 160v370M263 158v370M245 530h55l28 55v57M300 530v80l-55 20M280 160l40 60M322 150v490M331 150v490" fill="none" stroke="#141514" stroke-width="4"/>
          <path d="M285 165l28 50v20l-25-20zM290 240l30-15v20l-25 40-10-20z" fill="#555"/><circle cx="303" cy="454" r="9"/><circle cx="302" cy="475" r="12"/><circle cx="303" cy="497" r="7"/>
          <path d="M520 112H660q30 20 20 60-10 45-40 47H520q-38-10-40-52 0-46 40-55z" fill="#ccb566" stroke="#8a6d22" stroke-width="4"/>
          <path d="M580 105q40-15 70-2l-5 22-60-4z" fill="#b75a2c"/><path d="M645 102q80-20 85 50-5 65-60 62-15-10-12-40z" fill="#be3038" stroke="#622" stroke-width="5"/><path d="M645 112l18-8 32 45-22 16z" fill="#297071"/><path d="M655 150h24v45h-24z" fill="#888" stroke="#222" stroke-width="4"/><path d="M517 182l34 5-2 15-32-6z" fill="#111"/>
          <path d="M518 296q58-28 116 2 10 4 22 18-8 64-2 116-12 4-24 14-56 24-108 0-12-8-18-16 2-58-6-112 10-16 20-22z" fill="#dfe2eb" stroke="#080808" stroke-width="11"/>
          <path d="M575 370l-50-60M575 370V290M575 370l60-55M575 370l-65-30M575 370l75 20M575 370l-5 80M575 370l50 65M575 370l-60 60M520 330q50-50 110-5M530 350q40-50 100-15M510 370h145M540 300l80 60M610 300l-60 70" fill="none" stroke="#222" stroke-width="4"/><path d="M558 345l20-12 32 8v50h-50v-18h-20v-20z" fill="#111"/><path d="M560 350l45 35M570 385l36-42M585 340v50" stroke="#999" stroke-width="3"/>
          <path d="M712 220l108 2q28 15 38 50 12 100 2 205-12 35-35 50l-113 25z" fill="#668a84" stroke="#222a28" stroke-width="7"/><path d="M708 214l114 0M708 555q45-40 115-25" fill="none" stroke="#111" stroke-width="9"/><path d="M822 225q34 60 30 150t-30 145" fill="none" stroke="#344944" stroke-width="5"/>
          <path d="M768 240l35-10 22 50-40 15z" fill="#8e8e3f"/><path d="M780 340l40-10 4 60-40 15z" fill="#897259"/><path d="M785 295q25 20 0 45" stroke="#332" stroke-width="7" fill="none"/><path d="M765 415l12-14 30 4 14 24-6 24-34 8-14-16z" fill="#c9cbd2"/><path d="M782 425l12 14" stroke="#c05035" stroke-width="8" fill="none"/><path d="M798 444l14 8" stroke="#4a7fc0" stroke-width="8"/><path d="M770 470l42-4v40l-30 4z" fill="#777a70"/>
          <path d="M912 40v595l-45-10 -3-100q20-160-2-330z" fill="#70736d"/><path d="M912 40l-40 120 4 30 30-60zM880 480l32-30v55l-32 45zM880 570l28-25v70l-28 20z" fill="#a6a68c" stroke="#191919" stroke-width="6"/><path d="M865 240l44-100M868 280l40-80M865 520l46-70M912 20V640M900 150v310M867 470V200" fill="none" stroke="#181918" stroke-width="5"/>
          <use href="#sidelamp" x="828" y="138"/><use href="#sidelamp" x="828" y="596"/>
          <path d="M518 540h22v-5h90l20 10v75q-10 30-35 34h-60q-25-8-37-35z" fill="#72aaa9" stroke="#183035" stroke-width="7"/><path d="M543 535h84v46h-84z" fill="#aaa236"/><path d="M545 590l90-10-10 28-80 2z" fill="#308787"/>
          <use href="#lamp" x="492" y="246"/><use href="#lamp" x="668" y="246"/><use href="#lamp" x="843" y="248"/><use href="#lamp" x="492" y="406"/><use href="#lamp" x="668" y="406"/><use href="#lamp" x="843" y="406"/><use href="#lamp" x="492" y="565"/><use href="#lamp" x="668" y="565"/><use href="#lamp" x="317" y="408"/><use href="#lamp" x="317" y="248"/>
        </g>

        <!-- corridor -->
        <g transform="translate(520 410) scale(.33333)">
          <path d="M142 85H610l30 20H1235V90h40V299H142z" fill="#b4b6b4"/>
          <path d="M142 85H610l50 20H245z" fill="#908a80"/><path d="M245 108H1200V128H245z" fill="#f6f7f5"/>
          <path d="M142 86l103 21v164L142 299z" fill="#d5c4a6"/><path d="M142 297l98-28h5v26z" fill="#8c7d64"/>
          <path d="M245 108h20v165h-20z" fill="#f4f5f3"/><path d="M245 272H1222V296H245z" fill="#919391"/>
          <path d="M271 134H1194V267H271z" fill="#f1f3f1" stroke="#292723" stroke-width="13"/><path d="M1040 141h147v120h-147z" fill="#979a98"/>
          <path d="M300 215q60 30 90 15t60-50M480 175q40 10 80-20M620 220q30-50 95-55M780 200q40 40 100-20M870 170q40 10 80-20M930 230q30-40 70-30M350 170q10 40 40 60" fill="none" stroke="#e5e8e7" stroke-width="9"/>
          <path d="M1232 90h43v209h-53v-40h14z" fill="#706a60"/><path d="M1234 108h28v145h-28z" fill="#17130f"/><path d="M1222 260h53v39h-53z" fill="#aaa597"/>
          <path d="M142 85l103 22H1235M245 107v186M142 299V85M142 299H1275V90M142 299l110-28M270 297l80-4M520 297l60-4" fill="none" stroke="#1b1b1a" stroke-width="4"/>
          <use href="#lamp" x="490" y="192"/><use href="#lamp" x="711" y="192"/><use href="#lamp" x="931" y="192"/><use href="#lamp" x="1150" y="192"/>
          <g fill="#999"><circle cx="210" cy="181" r="5"/><circle cx="372" cy="175" r="5"/><circle cx="564" cy="174" r="5"/><circle cx="755" cy="174" r="5"/><circle cx="946" cy="174" r="5"/></g>
        </g>

        <!-- dining room and bath -->
        <g transform="translate(620 520) scale(.33333)">
          <path d="M198 48H935V100H1015V635H345v27H198z" fill="#a0a2a0"/>
          <path d="M198 48h54v62l-50 8v520l-4-40zM200 500h60v70L200 655z" fill="#c6b28d"/>
          <path d="M252 50H655V540H375L252 560z" fill="#2a221c"/><path d="M308 50H655V486H325v20h-17z" fill="#eceeec"/>
          <path d="M496 50H655V84L512 62V486H496zM535 442h95l22 16v28H535zM337 135h60v250h-60zM365 95q30 15 60 5v30q-30 0-60-35zM370 430q20 5 45-20v20q-20 20-45 0z" fill="#9a9d9b"/><path d="M565 208l90 18M560 332l95 16M560 340l95 24M512 460l30 5" stroke="#999" stroke-width="4"/>
          <path d="M280 450v88h75v-24H655" fill="none" stroke="#bfbcb5" stroke-width="7"/><path d="M278 50v60" stroke="#cfc8b8" stroke-width="8"/>
          <path d="M205 120l58-5v385h-58z" fill="#eceeec" stroke="#333" stroke-width="4"/><path d="M240 108h45v12h-20v380M265 120h20v90h-20M265 370h20v90h-20" fill="none" stroke="#111" stroke-width="7"/><path d="M266 210h20v155h-20z" fill="#e6e8e6"/>
          <path d="M255 560H375L345 640v22H200z" fill="#827358" stroke="#332e24" stroke-width="3"/><path d="M380 540h40l-35 98h-40z" fill="#80694e"/>
          <path d="M415 540H655V636H390z" fill="#a1a3a1"/><path d="M450 545h175v72H435z" fill="#272521"/><path d="M465 543h150v13H465zM455 602h150v13H455z" fill="#f3f4f2"/><path d="M460 570h155" stroke="#777" stroke-width="5"/><path d="M470 548l-30 66M625 540v78M612 555v60" stroke="#111" stroke-width="5"/>
          <g><use href="#seat" transform="translate(436 136) rotate(-90)"/><use href="#seat" transform="translate(438 430) rotate(90)"/><use href="#seat" transform="translate(352 196) rotate(180)"/><use href="#seat" transform="translate(352 264) rotate(180)"/><use href="#seat" transform="translate(352 334) rotate(180)"/><use href="#seat" transform="translate(532 195)"/><use href="#seat" transform="translate(532 264)"/><use href="#seat" transform="translate(532 334)"/></g>
          <path d="M378 150H493V402H378z" fill="url(#lace)" stroke="#111" stroke-width="6"/><path d="M422 290h20v45h-20z" fill="#544f50"/>
          <use href="#plate" x="402" y="205"/><use href="#plate" x="467" y="197"/><use href="#plate" x="402" y="282"/><use href="#plate" x="467" y="270"/><use href="#plate" x="402" y="354"/><use href="#plate" x="467" y="346"/>
          <path d="M666 50H935V92H680V620h-16z" fill="#fbfcfa"/><path d="M657 50V620" stroke="#111" stroke-width="9"/><path d="M664 80H920M680 92V475M666 50H935M907 50v40M932 50v50" stroke="#222" stroke-width="4"/>
          <path d="M682 92H888V475H682z" fill="#8b8e8c"/><path d="M684 92h22v84h62v90q15 50-5 70 20 60 10 135L684 466z" fill="#e7e9e7"/>
          <path d="M835 92h32v34h-32z" fill="#222" stroke="#444" stroke-width="4"/><path d="M895 92v110l-14 10v85l-8 5 6 60-5 110-110 10M888 360h90l14-20M888 360v110" fill="none" stroke="#111" stroke-width="10"/>
          <path d="M892 200h50v145h-50zM895 475l80 5 20 110-105-30z" fill="#8c8e8c"/><path d="M905 95h100v135H905z" fill="#fdfefc" stroke="#222" stroke-width="5"/><path d="M928 95h88V635H990V230" fill="none" stroke="#555" stroke-width="5"/><path d="M935 236h55v95h-42v-95" fill="#8c8e8c" stroke="#161616" stroke-width="7"/>
          <path d="M904 370h86v105h-86z" fill="#b6b8b6" stroke="#222" stroke-width="5"/><path d="M910 375l50 43h30" fill="none" stroke="#111" stroke-width="4"/><path d="M964 420h27v50h-27z" fill="#f7f8f6"/><path d="M968 480l22 120M1003 98v530" stroke="#222" stroke-width="7"/>
          <path d="M685 470h90v56h-90z" fill="#161716"/><path d="M690 490l80 20M700 475v50M730 475v50M755 475v50" stroke="#777" stroke-width="4"/><path d="M775 495h110v50H780z" fill="#bcbebc"/><path d="M803 497h28v20h-28z" fill="#fff"/><path d="M775 485h110M795 545l100 5 10 20H795z" stroke="#181918" stroke-width="9" fill="#333"/><path d="M820 550v20M850 550v20M880 550v20" stroke="#bbb" stroke-width="4"/>
          <path d="M684 530h108v40h130v38H684z" fill="#fdfefc" stroke="#222" stroke-width="4"/><path d="M694 605v-66h88v38h130" fill="none" stroke="#777" stroke-width="3"/><path d="M198 48V662H345M198 48H655M385 636h630" fill="none" stroke="#222" stroke-width="4"/>
          <use href="#lamp" x="319" y="77"/><use href="#lamp" x="472" y="77"/><use href="#lamp" x="624" y="77"/><use href="#lamp" x="319" y="232"/><use href="#lamp" x="611" y="232"/><use href="#lamp" x="752" y="232"/><use href="#lamp" x="319" y="387"/><use href="#lamp" x="611" y="387"/><use href="#lamp" x="752" y="387"/><use href="#lamp" x="319" y="541"/><use href="#lamp" x="472" y="541"/><use href="#lamp" x="624" y="541"/>
        </g>

        <!-- service balcony -->
        <g transform="translate(660 690) scale(.33333)">
          <path d="M243 166H858v36h59V390H243z" fill="#9b9d9b"/>
          <path d="M268 290H850L890 362H262z" fill="#4b4d4a"/><path d="M465 168H675V222H465z" fill="#f3f5f2"/><path d="M675 168H795l15 54H675z" fill="#a9aba9"/>
          <path d="M465 222H808l8 28H465z" fill="#1a1613"/><path d="M465 248H800M465 272H810" stroke="#a5a29b" stroke-width="7"/><path d="M465 258H806M465 284H820" stroke="#2a2723" stroke-width="8"/><path d="M470 297H770" stroke="#a7a08f" stroke-width="7"/>
          <path d="M268 192H465V290H268z" fill="#edefed"/><path d="M268 168H465V194H268z" fill="#555"/><ellipse cx="318" cy="181" rx="32" ry="11" fill="#111" stroke="#aaa" stroke-width="3"/><ellipse cx="417" cy="181" rx="34" ry="11" fill="#111" stroke="#aaa" stroke-width="3"/>
          <g fill="#f9faf8" stroke="#777" stroke-width="4"><rect x="273" y="204" width="86" height="68" rx="10"/><rect x="373" y="204" width="86" height="68" rx="10"/></g><path d="M345 216h30M390 216h70M360 232h30M430 222h35M430 240h35M430 258h35" stroke="#a9aaa7" stroke-width="3"/>
          <path d="M795 168h62v34h-50z" fill="#6c6e6c" stroke="#111" stroke-width="5"/><path d="M815 205h53v80h-53z" fill="#7c7e7c" stroke="#333" stroke-width="3"/><path d="M808 168h30v28h-30z" fill="#ddd" stroke="#111" stroke-width="4"/><path d="M868 202h49v182L868 290z" fill="#aeb0ae"/>
          <path d="M243 166l23 128-20 70v-198z" fill="#bfc1bf"/><path d="M246 364H890l25 24H246z" fill="#9a9c9a"/><path d="M465 166V305M365 166V290M682 210v95M268 166v128M266 322H875M262 362H890M268 290l-24 90M360 290v74M765 285l25 75M850 285l40 75 25 28M868 202v88M243 390H917V202H858" fill="none" stroke="#151615" stroke-width="5"/><path d="M365 294l-4 68M767 290l20 70" stroke="#838583" stroke-width="5"/><path d="M410 322H610M268 294H350" stroke="#b9bab7" stroke-width="4"/>
          <use href="#lamp" x="345" y="290"/><use href="#lamp" x="498" y="291"/><use href="#lamp" x="651" y="291"/><use href="#lamp" x="804" y="289"/>
        </g>
        <path d="M1010 402v14l3-3 3 6 2-1-2-6h4z" fill="#111" stroke="#aaa" stroke-width="1"/>
      </svg>
      <span class="fps">12</span>
    </main>
  </div>
  <aside class="tray"><button class="traytab">默认面板</button></aside>
</div>

<footer class="status">
  <svg class="info dim" viewBox="0 0 14 14"><circle cx="7" cy="7" r="6" fill="none" stroke="currentColor" stroke-width="1.200"/><circle cx="7" cy="5" r="2" fill="currentColor"/><path d="M7 5v6" stroke="currentColor" stroke-width="1.500"/></svg>
  <svg class="info" viewBox="0 0 14 14"><circle cx="7" cy="7" r="6" fill="none" stroke="currentColor" stroke-width="1.400"/><circle cx="7" cy="5" r="2" fill="currentColor"/><path d="M7 5v6" stroke="currentColor" stroke-width="1.500"/></svg>
  <i class="bar"></i>
  <span class="hint">单击或拖动以选择对象。Shift = 加/减。Ctrl = 加。Shift + Ctrl = 减。</span>
  <i class="bar"></i>
  <label for="measure">数值</label>
  <input id="measure" type="text">
</footer>
</body>
</html>
```

FILE: styles.css
```css
* { box-sizing: border-box; }

body {
  margin: 0;
  height: 100vh;
  display: flex;
  flex-direction: column;
  overflow: hidden;
  background: #f0f2f0;
  color: #222;
  font: 12px/16px "Noto Sans", "Noto Sans CJK SC", sans-serif;
}

button {
  margin: 0;
  padding: 0;
  border: 0;
  background: none;
  color: inherit;
  font: inherit;
}

.defs { position: absolute; width: 0; height: 0; }

.menubar {
  flex: none;
  display: flex;
  gap: 11px;
  height: 15px;
  padding: 0 0 1px 3px;
  background: linear-gradient(#e3eaf6, #d6dceb);
  border-bottom: 1px solid #e6e9ef;
  color: #707276;
  font: 12px/12px "Liberation Sans", "Noto Sans CJK SC", sans-serif;
  white-space: nowrap;
}

.toolbars { flex: none; }

.toolrow { display: flex; height: 27px; }

.group {
  display: flex;
  align-items: center;
  padding-right: 1px;
  border-right: 1px solid #c3c5c5;
  border-bottom: 1px solid #cbcdcd;
  background: #f3f4f3;
}
.group.first { padding-left: 5px; }

.grip {
  width: 9px;
  height: 20px;
  background: radial-gradient(circle, #b5b7b7 1px, transparent 1px) 2px 0 / 4px 4px repeat-y;
}

.sep {
  width: 1px;
  height: 20px;
  margin: 0 3px;
  background: #a5a7a7;
}

.tool {
  display: flex;
  align-items: center;
  justify-content: center;
  width: 25px;
  height: 23px;
}
.tool svg { width: 18px; height: 18px; }
.tool svg.big { width: 20px; height: 20px; }
.tool.on {
  border: 1px solid #707272;
  border-radius: 2px;
  background: #e1e3e3;
}

.slide { width: 130px; margin-left: 9px; }
.slide.hours { margin-left: 18px; }
.shadows { padding-right: 12px; }
.slide input {
  appearance: none;
  display: block;
  width: 100%;
  height: 7px;
  margin: 0;
  border: 0;
  border-left: 1px solid #777;
}
.slide input::-webkit-slider-thumb {
  appearance: none;
  width: 5px;
  height: 11px;
  border: 1px solid #bbb;
  background: #fff;
}
.months input { background: linear-gradient(90deg, #fbf8e8, #ecd77b 20%, #e3a33c 38%, #c9471f 60%, #c82a22 70%, #e98f86 84%, #f6f1ef); }
.hours input { background: linear-gradient(90deg, #eef2ee, #a9bcc4 28%, #7d93d8 50%, #5966c5 68%, #283380 85%, #0b0f2b); }

.ticks {
  display: flex;
  justify-content: space-between;
  margin-top: 4px;
  font: 9px/10px "Liberation Sans", "Noto Sans CJK SC", sans-serif;
  color: #111;
}
.months .ticks { padding-left: 4px; }

.combo {
  position: relative;
  display: flex;
  align-items: center;
  width: 121px;
  height: 20px;
  margin: 0 2px;
  padding-left: 8px;
  background: #fff;
}
.check { width: 17px; font: 10px/16px "DejaVu Sans", sans-serif; }
.combo select {
  flex: 1;
  appearance: none;
  border: 0;
  padding: 0;
  background: none;
  color: #111;
  font: 11px/18px "Liberation Sans", "Noto Sans CJK SC", sans-serif;
}
.drop {
  position: absolute;
  right: 0;
  top: 0;
  width: 14px;
  height: 20px;
  pointer-events: none;
}

.workspace { flex: 1; display: flex; min-height: 0; }

.palette { flex: none; width: 50px; padding-top: 29px; }
.hgrip {
  display: block;
  width: 44px;
  height: 4px;
  margin-bottom: 4px;
  background: radial-gradient(circle, #b5b7b7 1px, transparent 1px) 0 0 / 4px 4px repeat-x;
}
.tools {
  display: grid;
  grid-template-columns: 24px 24px;
  margin-left: -1px;
}
.palette .tool { width: 24px; height: 24px; }
.palette hr {
  width: 46px;
  height: 1px;
  margin: 2px 0 3px;
  border: 0;
  background: #a8aaaa;
}
.tools.last {
  width: 48px;
  padding-top: 2px;
  border-bottom: 1px solid #bbbdbd;
}

.center { flex: 1; display: flex; flex-direction: column; min-width: 0; }

.scenes {
  flex: none;
  height: 24px;
  border-bottom: 1px solid #8f9190;
  background: linear-gradient(#f0f2f0 18px, #a9abab 18px, #a9abab 19px, #fbfcfb 19px);
}
.scene {
  display: block;
  width: 55px;
  height: 19px;
  border: 1px solid #9fa1a1;
  border-bottom: 0;
  background: #fcfdfc;
  color: #222;
}

.viewport {
  position: relative;
  flex: 1;
  min-height: 0;
  border-left: 1px solid #777;
  background: #474946;
}
.model { display: block; width: 100%; height: 100%; }
.fps {
  position: absolute;
  left: 24px;
  top: 0;
  color: #19e62c;
  font: bold 22px/24px Roboto, sans-serif;
  text-shadow: 1px 1px 0 #000, -1px 0 0 #000;
}

.tray {
  flex: none;
  width: 18px;
  padding: 26px 0 0 3px;
  background: #f9faf9;
}
.traytab {
  display: block;
  width: 15px;
  height: 70px;
  padding: 3px 0 0;
  border: 1px solid #b6b8b8;
  border-right: 0;
  background: #f0f2f1;
  color: #555;
  font: 11px/14px "Noto Sans CJK SC", sans-serif;
  writing-mode: vertical-rl;
  text-orientation: sideways;
  text-align: left;
}

.status {
  flex: none;
  display: flex;
  align-items: center;
  height: 21px;
  padding: 4px 2px 0;
  background: #f2f4f3;
  font: 14px/17px Lato, "Noto Sans CJK SC", sans-serif;
  white-space: nowrap;
}
.info { width: 14px; height: 14px; margin-right: 14px; color: #222; }
.info.dim { color: #aaa; }
.info + .info { margin-right: 11px; }
.bar { width: 1px; height: 8px; margin-right: 10px; background: #999; }
.hint { flex: 1; }
.status label { margin-right: 9px; }
.status input {
  width: 190px;
  height: 17px;
  padding: 0 4px;
  border: 1px solid #c3cbd2;
  border-bottom: 0;
  background: #edf0ef;
  font: inherit;
}
```
